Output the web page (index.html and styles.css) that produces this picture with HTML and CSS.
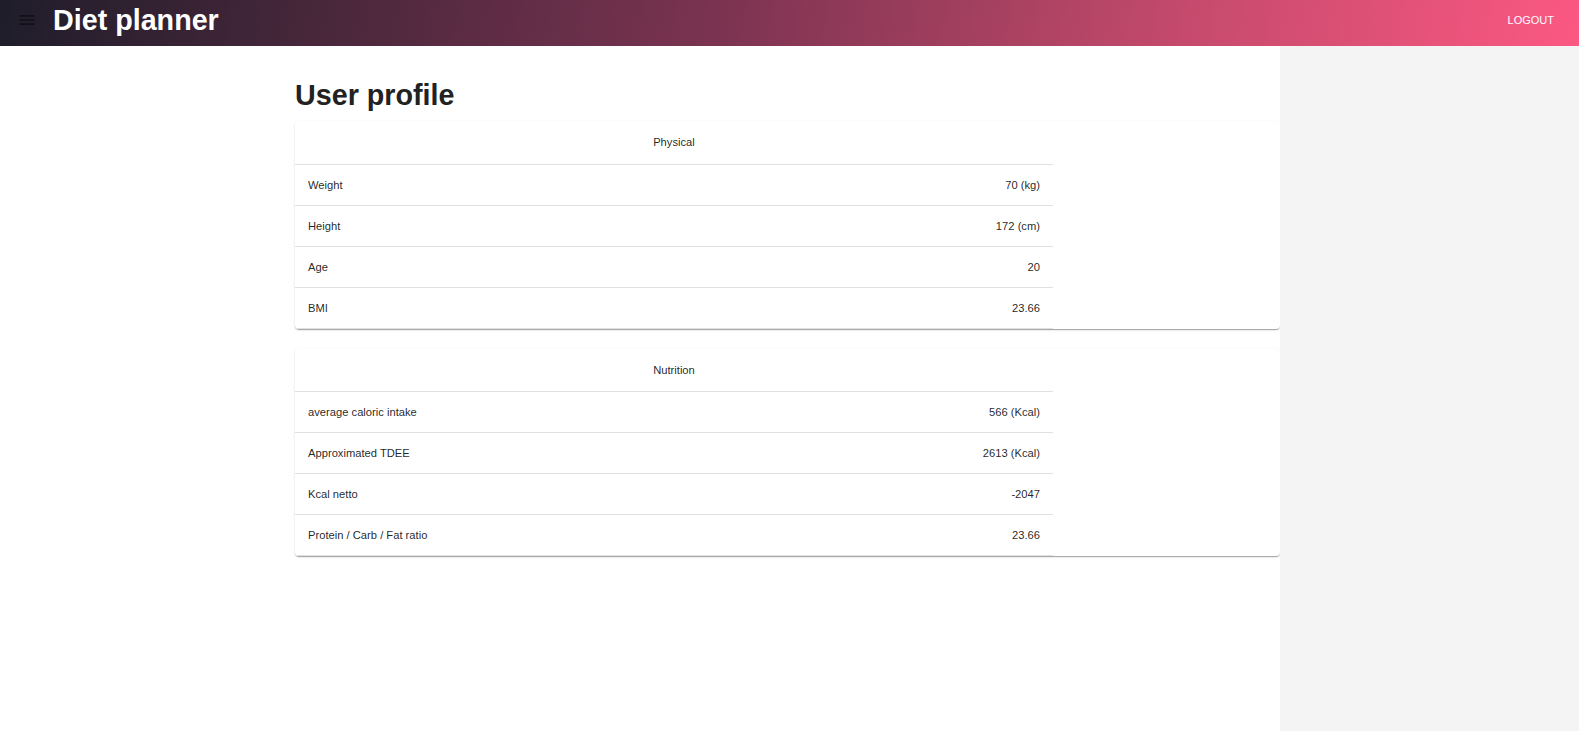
FILE: index.html
```html
<!DOCTYPE html>
<html lang="en">
<head>
<meta charset="utf-8">
<title>Diet planner</title>
<link rel="stylesheet" href="styles.css">
</head>
<body>
<header class="topbar">
  <button class="menu-btn" aria-label="menu">
    <svg viewBox="0 0 24 24" width="20" height="20"><path d="M3 18h18v-2H3v2zm0-5h18v-2H3v2zm0-7v2h18V6H3z"/></svg>
  </button>
  <h1 class="app-title">Diet planner</h1>
  <span class="spacer"></span>
  <button class="logout">LOGOUT</button>
</header>
<div class="layout">
  <main class="main">
    <h2 class="page-title">User profile</h2>
    <section class="card">
      <table class="info">
        <thead><tr><th colspan="2">Physical</th></tr></thead>
        <tbody>
          <tr><td>Weight</td><td class="val">70 (kg)</td></tr>
          <tr><td>Height</td><td class="val">172 (cm)</td></tr>
          <tr><td>Age</td><td class="val">20</td></tr>
          <tr><td>BMI</td><td class="val">23.66</td></tr>
        </tbody>
      </table>
    </section>
    <section class="card">
      <table class="info">
        <thead><tr><th colspan="2">Nutrition</th></tr></thead>
        <tbody>
          <tr><td>average caloric intake</td><td class="val">566 (Kcal)</td></tr>
          <tr><td>Approximated TDEE</td><td class="val">2613 (Kcal)</td></tr>
          <tr><td>Kcal netto</td><td class="val">-2047</td></tr>
          <tr><td>Protein / Carb / Fat ratio</td><td class="val">23.66</td></tr>
        </tbody>
      </table>
    </section>
  </main>
  <aside class="side"></aside>
</div>
</body>
</html>
```
FILE: styles.css
```css
* { box-sizing: border-box; }
html, body { height: 100%; }
body {
  margin: 0;
  font-family: "Liberation Sans", Arial, sans-serif;
  color: rgba(0,0,0,0.87);
  background: #fff;
  display: flex;
  flex-direction: column;
}
.topbar {
  height: 46px;
  flex: none;
  display: flex;
  align-items: flex-start;
  background: linear-gradient(100deg, #1f1d2a 0%, #7a3350 45%, #c54a6c 75%, #fb5882 100%);
  color: #fff;
}
.menu-btn {
  background: none;
  border: 0;
  padding: 0;
  margin: 10px 0 0 17px;
  width: 20px;
  height: 20px;
  display: flex;
}
.menu-btn svg { fill: #121016; }
.app-title {
  margin: 0 0 0 16px;
  font-size: 28.7px;
  line-height: 41px;
  font-weight: 700;
  color: #fff;
}
.spacer { flex: 1; }
.logout {
  background: none;
  border: 0;
  color: #fff;
  font-family: "Liberation Sans", Arial, sans-serif;
  font-size: 11px;
  line-height: 14px;
  margin: 13px 25px 0 0;
  padding: 0;
}
.layout {
  flex: 1;
  display: flex;
}
.main {
  width: 1280px;
  flex: none;
  padding: 0 0 0 295px;
}
.side {
  flex: 1;
  background: #f4f4f4;
}
.page-title {
  margin: 32px 0 9px 0;
  font-size: 28.7px;
  line-height: 34px;
  font-weight: 700;
  color: #222;
}
.card {
  background: #fff;
  border-radius: 4px;
  box-shadow: 0 2px 1px -1px rgba(0,0,0,0.2), 0 1px 1px 0 rgba(0,0,0,0.14), 0 1px 3px 0 rgba(0,0,0,0.1);
  margin-bottom: 20px;
}
.info {
  width: 758px;
  border-collapse: collapse;
  font-size: 11.2px;
}
.info th {
  height: 43px;
  font-weight: 400;
  text-align: center;
  border-bottom: 1px solid #e0e0e0;
  padding: 0 13px;
}
.info td {
  height: 41px;
  padding: 0 13px;
  border-bottom: 1px solid #e0e0e0;
}
.info td.val { text-align: right; }
```
